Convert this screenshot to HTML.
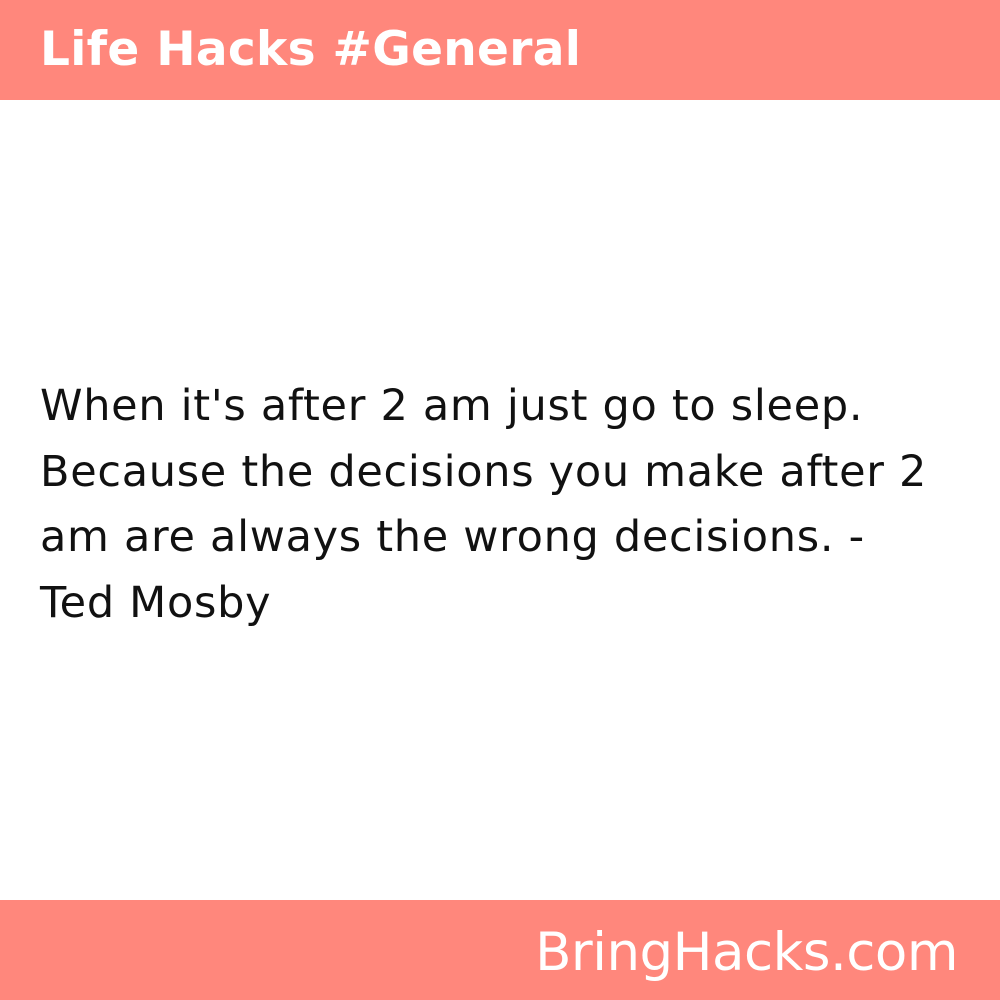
<!DOCTYPE html>
<html><head><meta charset="utf-8"><style>
html,body{margin:0;padding:0;width:1000px;height:1000px;background:#fff;overflow:hidden;font-family:"DejaVu Sans","Liberation Sans",sans-serif;}
.top{position:absolute;left:0;top:0;width:1000px;height:100px;background:#ff877c;}
.top span{position:absolute;left:40px;top:20px;font-size:47px;color:#fff;font-weight:bold;letter-spacing:0.3px;white-space:nowrap;line-height:60px;}
.body{position:absolute;left:40px;top:374px;font-size:43px;line-height:65.5px;color:#111;white-space:nowrap;letter-spacing:0.7px;}
.bot{position:absolute;left:0;top:900px;width:1000px;height:100px;background:#ff877c;}
.bot span{position:absolute;right:42px;top:18px;font-size:53px;color:#fff;line-height:70px;white-space:nowrap;letter-spacing:-0.5px;}
</style></head><body>
<div class="top"><span>Life Hacks #General</span></div>
<div class="body">When it's after 2 am just go to sleep.<br>Because the decisions you make after 2<br>am are always the wrong decisions. -<br>Ted Mosby</div>
<div class="bot"><span>BringHacks.com</span></div>
</body></html>
